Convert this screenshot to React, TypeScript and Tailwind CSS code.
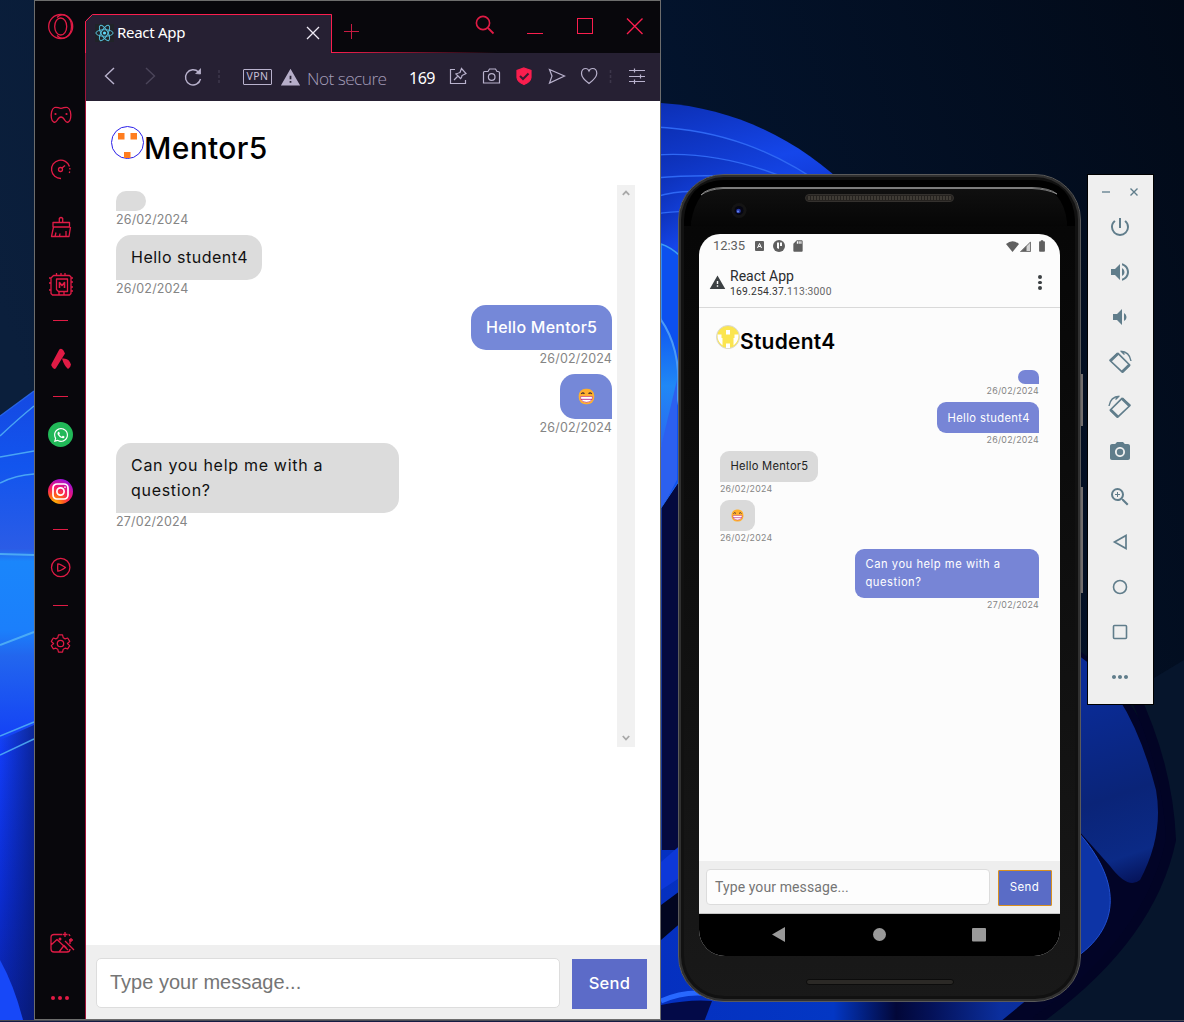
import type { ReactNode } from "react";
import { FaWhatsapp, FaInstagram } from "react-icons/fa";
import {
  MdPowerSettingsNew,
  MdVolumeUp,
  MdVolumeDown,
  MdPhotoCamera,
  MdZoomIn,
  MdMoreHoriz,
  MdWarning,
  MdSdCard,
  MdBatteryFull,
} from "react-icons/md";

type Message = { mine: boolean; text: string; date: string };

const conversation: Message[] = [
  { mine: false, text: "", date: "26/02/2024" },
  { mine: false, text: "Hello student4", date: "26/02/2024" },
  { mine: true, text: "Hello Mentor5", date: "26/02/2024" },
  { mine: true, text: "grin", date: "26/02/2024" },
  { mine: false, text: "Can you help me with a\nquestion?", date: "27/02/2024" },
];

function Wallpaper() {
  return (
    <svg className="absolute inset-0" width="1184" height="1022" viewBox="0 0 1184 1022" fill="none">
      <defs>
        <linearGradient id="night" x1="0" y1="0.3" x2="1" y2="0">
          <stop offset="0" stopColor="#0b1f3c" />
          <stop offset="0.55" stopColor="#03142e" />
          <stop offset="1" stopColor="#020a18" />
        </linearGradient>
        <linearGradient id="left" x1="0" y1="391" x2="0" y2="1022" gradientUnits="userSpaceOnUse">
          <stop offset="0" stopColor="#1549e2" />
          <stop offset="0.12" stopColor="#1255ee" />
          <stop offset="0.25" stopColor="#2b5ce6" />
          <stop offset="0.27" stopColor="#1a86fb" />
          <stop offset="0.38" stopColor="#1b7ffb" />
          <stop offset="0.42" stopColor="#2266ee" />
          <stop offset="0.57" stopColor="#123cf6" />
          <stop offset="0.8" stopColor="#0b2cd0" />
          <stop offset="1" stopColor="#0a22a0" />
        </linearGradient>
        <linearGradient id="shadeR" x1="0" y1="0" x2="1" y2="0">
          <stop offset="0" stopColor="#06145c" stopOpacity="0" />
          <stop offset="1" stopColor="#06145c" stopOpacity="0.6" />
        </linearGradient>
        <linearGradient id="fold" x1="0" y1="0" x2="0.3" y2="1">
          <stop offset="0" stopColor="#0c2fb4" />
          <stop offset="0.5" stopColor="#1546ea" />
          <stop offset="1" stopColor="#0d2fc4" />
        </linearGradient>
        <linearGradient id="petal" x1="0" y1="0" x2="0" y2="1">
          <stop offset="0" stopColor="#0d4ff0" />
          <stop offset="0.5" stopColor="#2088f5" />
          <stop offset="1" stopColor="#2d60ee" />
        </linearGradient>
        <linearGradient id="low" x1="661" y1="0" x2="1184" y2="0" gradientUnits="userSpaceOnUse">
          <stop offset="0" stopColor="#0530c0" />
          <stop offset="0.33" stopColor="#0337c4" />
          <stop offset="0.45" stopColor="#020738" />
          <stop offset="0.52" stopColor="#04125a" />
          <stop offset="0.65" stopColor="#0b2f9e" />
          <stop offset="0.85" stopColor="#0a2c9a" />
          <stop offset="1" stopColor="#03103c" />
        </linearGradient>
        <linearGradient id="outer" x1="1085" y1="700" x2="1150" y2="890" gradientUnits="userSpaceOnUse">
          <stop offset="0" stopColor="#0a2b96" />
          <stop offset="0.5" stopColor="#0a2478" />
          <stop offset="0.8" stopColor="#0b2a86" />
          <stop offset="1" stopColor="#030a48" />
        </linearGradient>
      </defs>
      <rect width="1184" height="1022" fill="url(#night)" />
      <path d="M0 416L34 391V1022H0Z" fill="url(#left)" />
      <path d="M0 740L34 725V1022H0Z" fill="url(#shadeR)" />
      <path d="M0 960Q14 985 23 1020H0Z" fill="#1748f8" />
      <g stroke="#53b4f6" strokeWidth="1.4" opacity=".85">
        <path d="M0 416L34 391" stroke="#2c6cf0" />
        <path d="M0 436Q18 419 34 406" />
        <path d="M0 457L34 451" />
        <path d="M0 483Q16 475 34 474" />
        <path d="M0 554L34 555" strokeWidth="2" />
        <path d="M0 645L34 632" strokeWidth="2" />
        <path d="M0 736L34 722" />
        <path d="M0 755L34 739" />
      </g>
      <path d="M661 103C740 108 805 145 850 190V250H661Z" fill="url(#fold)" />
      <g fill="url(#fold)" stroke="#2f68f4" strokeWidth="1.4">
        <path d="M655 127C720 130 775 150 830 190V300H655Z" />
        <path d="M655 155C710 151 755 165 790 180V300H655Z" />
        <path d="M655 178Q690 175 720 176V300H655Z" />
        <path d="M655 197Q680 190 700 192V300H655Z" />
        <path d="M655 214Q680 210 700 212V300H655Z" />
      </g>
      <path d="M661 244Q680 250 700 280V520H661Z" fill="#0c50ee" stroke="#3c9cf6" strokeWidth="1.5" />
      <path d="M655 312C686 348 686 410 655 460Z" fill="url(#petal)" stroke="#4a9af8" strokeWidth="2" />
      <path d="M661 447L677 380V480L661 510Z" fill="#2c60ee" />
      <path d="M661 508L685 472V860H661Z" fill="#04093e" stroke="#2467ef" />
      <path d="M661 850H1184V1022H661Z" fill="url(#low)" />
      <path d="M661 862L684 842V875L661 890Z" fill="#0d38d8" />
      <path d="M661 905L684 888V920L661 940Z" fill="#020620" />
      <path d="M661 1001Q690 988 720 996" stroke="#2868ff" strokeWidth="5" />
      <path d="M661 1022V1005Q690 999 712 1001L704 1022Z" fill="#030a48" />
      <path d="M1078 650Q1140 690 1184 820V1022H1000L1078 958Z" fill="#020427" />
      <path d="M1078 655Q1130 690 1156 790Q1164 835 1140 880Q1128 890 1110 866L1078 830Z" fill="url(#outer)" />
      <path d="M1078 832C1121 880 1121 925 1078 956Z" fill="#0d34a6" stroke="#214fd0" />
      <path d="M1134 690Q1168 750 1171 850Q1150 940 1040 1020H1184V660Z" fill="#06152c" />
      <path d="M1132 690Q1168 765 1171 840Q1150 940 1036 1021" stroke="#020425" strokeWidth="10" />
      <rect y="1020" width="1184" height="1" fill="#4a4c55" />
      <rect y="1021" width="1184" height="1" fill="#141b43" />
    </svg>
  );
}

function Grin({ size }: { size: number }) {
  return (
    <svg width={size} height={size} viewBox="0 0 18 18" className="shrink-0">
      <rect x=".8" y=".8" width="16.4" height="16.4" rx="7.2" fill="#ffb02e" />
      <path d="M3.4 6.3Q5 4 6.8 6.100M11.200 6.100Q13 4 14.600 6.300" stroke="#402a32" strokeWidth="1.3" fill="none" />
      <path d="M2.8 9H15.2V11Q14 15.2 9 15.2Q4 15.2 2.8 11Z" fill="#fff" stroke="#bb1d80" strokeWidth=".6" />
      <path d="M3 12H15" stroke="#bb1d80" strokeWidth=".9" />
    </svg>
  );
}

function SideIcon({ children, className }: { children: ReactNode; className: string }) {
  return (
    <svg
      width="30"
      height="30"
      viewBox="0 0 30 30"
      fill="none"
      stroke="#e01b45"
      strokeWidth="1.3"
      strokeLinejoin="round"
      className={"shrink-0 " + className}
    >
      {children}
    </svg>
  );
}

function Dash({ className }: { className: string }) {
  return <div className={"mr-px h-px w-[15px] shrink-0 bg-[#e01b45] " + className} />;
}

function SideBar() {
  return (
    <aside className="flex w-[51px] shrink-0 flex-col items-center border-r border-[#a0143a] bg-[#08070c] pl-0.5">
      <SideIcon className="mt-[11px]">
        <circle cx="14.7" cy="14.5" r="12" />
        <ellipse cx="14.7" cy="14.5" rx="6" ry="8.500" />
        <path d="M11 5.500C17 -1 25.500 5 25.500 14.500C25.500 24 17 30 11 23.500" />
      </SideIcon>
      <SideIcon className="mt-[58px]">
        <path d="M8.5 7.5C11 6.6 12.5 8.3 15 8.3C17.5 8.3 19 6.6 21.5 7.5C24.5 8.8 25.2 14 24.6 18C24 22.5 20.7 23.5 19 20.5C17.5 17.8 16.5 17 15 17C13.5 17 12.5 17.8 11 20.5C9.3 23.5 6 22.5 5.4 18C4.8 14 5.5 8.8 8.5 7.5Z" />
        <circle cx="9.5" cy="14" r="1.1" fill="#e01b45" stroke="none" />
        <circle cx="20.5" cy="14" r="1.1" fill="#e01b45" stroke="none" />
      </SideIcon>
      <SideIcon className="mt-[25px]">
        <path d="M15 23.5A9.2 9.2 0 1 1 23.5 11.5" />
        <path d="M23.8 13A9.2 9.2 0 0 1 22.5 19.5" strokeDasharray="1.5 2" />
        <circle cx="14.5" cy="14.5" r="2" />
        <path d="M16 13L19 10.5" />
      </SideIcon>
      <SideIcon className="mt-[28px]">
        <path d="M13.3 9V5.5Q15 3.5 16.7 5.5V9M7 9.5H23.5V14H7ZM7.5 14L5.5 23.5H23L24.5 14M10 19.5L9 23.5M14 20.5L13.5 23.5M20 18V23.5" />
      </SideIcon>
      <SideIcon className="mt-[27px]">
        <path d="M7.5 5.5H23.5L25 7V23.5L23.5 25H6.5L5 23.5V8Z M10.5 9H21.5V21.5H12.5L10.5 19.5Z M3 8H5M3 13H5M3 20H5M25 8H27M25 12H27M25 17H27M25 21H27M10.5 5.5V3M15 5.5V3M19 5.5V3M13 21.5V25M18 21.5V25" />
        <path d="M13.5 18V12.5L16 15.5L18.5 12.5V18" strokeWidth="1.6" />
      </SideIcon>
      <Dash className="mt-[20px]" />
      <SideIcon className="mt-[23px]">
        <path d="M13.3 5.5Q15.5 3.8 17.5 6.5L19 9.5L10 24Q8.5 26 6.5 23.5L5.3 21.5Q5 20.5 6 19Z" fill="#e01b45" stroke="none" />
        <path d="M16 14.5Q23 13.500 25 20.5Q24.5 24 22 25Q18 21.5 16 14.5Z" fill="#e01b45" stroke="none" />
      </SideIcon>
      <Dash className="mt-[22px]" />
      <div className="mr-px mt-[25px] flex size-[25px] shrink-0 items-center justify-center rounded-full bg-[#21b858] text-white">
        <FaWhatsapp size={16} />
      </div>
      <div className="mr-px mt-[32px] flex size-[25px] shrink-0 items-center justify-center rounded-full bg-[radial-gradient(circle_at_25%_100%,#ffc400_0%,#ff5a1f_30%,#f3166c_55%,#8a10f5_90%)] text-white">
        <svg width="17" height="17" fill="none" stroke="#fff" strokeWidth="1.7">
          <rect x="1" y="1" width="15" height="15" rx="4" />
          <circle cx="8.5" cy="8.5" r="3.600" />
          <circle cx="13" cy="4.200" r=".6" fill="#fff" strokeWidth=".5" />
        </svg>
      </div>
      <Dash className="mt-[25px]" />
      <SideIcon className="mt-[22px]">
        <circle cx="14.7" cy="15.5" r="9.200" />
        <path d="M11.8 11.8Q14 11.6 19.5 15.5Q14 19.3 11.8 19.2Q11.5 15.5 11.8 11.8Z" />
      </SideIcon>
      <Dash className="mt-[23px]" />
      <SideIcon className="mt-[22px]">
        <circle cx="14.500" cy="15.5" r="3.2" />
        <path
          d="M12.8 6.5H17.2L18 9.6L20 10.7L22.8 9.8L25 13.4L22.5 15.5L25 17.8L22.8 21.3L20 20.5L18 21.6L17.2 24.7H12.8L12 21.6L10 20.5L7.2 21.3L5 17.8L7.5 15.5L5 13.4L7.2 9.8L10 10.7L12 9.6Z"
          transform="translate(.7 .7) scale(.92 .95)"
        />
      </SideIcon>
      <SideIcon className="mt-auto">
        <path d="M16 5.5H8Q5 5.5 5 8.5V20Q5 23 8 23H21Q24 23 24 20M5 16L11 10.5L22 21M13 23L18 16.5L20.5 19M19 12L28 21M24 10V15" />
        <circle cx="14" cy="10" r="1.5" fill="#e01b45" stroke="none" />
        <path d="M19 3V8M16.5 5.5H21.5M25 9V13M23 11H27M24 7Q23.5 5.5 22.5 5.5" />
      </SideIcon>
      <div className="mt-[37px] mb-[19px] flex gap-[3px] pr-0.5">
        <i className="size-1 rounded-full bg-[#e01b45]" />
        <i className="size-1 rounded-full bg-[#e01b45]" />
        <i className="size-1 rounded-full bg-[#e01b45]" />
      </div>
    </aside>
  );
}

function ReactLogo() {
  return (
    <svg width="19" height="18" viewBox="-9.5 -9 19 18" fill="none" stroke="#56bcd8" className="bg-[#202328]">
      <circle r="1.6" fill="#61dafb" stroke="none" />
      <ellipse rx="8.6" ry="3.3" />
      <ellipse rx="8.6" ry="3.3" transform="rotate(60)" />
      <ellipse rx="8.6" ry="3.3" transform="rotate(120)" />
    </svg>
  );
}

function TitleBar() {
  return (
    <div className="relative flex h-[52px] shrink-0 bg-[#08070c]">
      <div className="absolute -left-px top-0 h-[20px] w-px bg-[#08070c]" />
      <div className="relative mt-[13px] flex h-[39px] w-[246px] items-center bg-[#262033] pb-0.5 pl-[9px]">
        <svg className="absolute -left-px top-0" width="247" height="39" fill="none" stroke="#fa1e4e">
          <path d="M0 0H7L0 7Z" fill="#08070c" stroke="none" />
          <path d="M.5 39V7.5L7.5 .5H246.5V39" />
        </svg>
        <ReactLogo />
        <span className="ml-[3px] pb-px font-['Noto_Sans'] text-[15px] leading-5 tracking-[-0.3px] text-white">React App</span>
        <svg className="ml-auto mr-[12px]" width="14" height="14" stroke="#eeeaf5" strokeWidth="1.3">
          <path d="M1 1L13 13M13 1L1 13" />
        </svg>
      </div>
      <div className="relative flex grow">
        <div className="absolute bottom-0 left-0 h-px w-[165px] bg-linear-to-r from-[#fa1e4e] to-transparent" />
        <svg width="328" height="51" fill="none" stroke="#fa1e4e">
          <path d="M12 30.5H27M19.5 23V38" stroke="#c81a42" />
          <circle cx="151" cy="22" r="6.6" strokeWidth="1.6" stroke="#e01b45" />
          <path d="M156 27L161.5 32.5" strokeWidth="1.8" stroke="#e01b45" />
          <path d="M195 32.5H211" />
          <rect x="245.5" y="17.5" width="15" height="15" />
          <path d="M295 17.5L310.5 33M310.5 17.5L295 33" strokeWidth="1.4" />
        </svg>
      </div>
    </div>
  );
}

function ToolBar() {
  return (
    <div className="flex h-[48px] shrink-0 items-center bg-[#262033]">
      <svg width="154" height="48" fill="none" stroke="#b9b2cd" strokeWidth="1.4">
        <path d="M28 15L19.5 23L28 31" />
        <path d="M60 15L68.5 23L60 31" stroke="#4b455a" />
        <path d="M112.500 19A7.600 7.600 0 1 0 114.500 26" />
        <path d="M109.500 20.500L114.500 21V15.500" fill="#b9b2cd" strokeWidth=".8" />
        <path d="M133 17V32" stroke="#3c364a" strokeWidth="1.600" strokeDasharray="3 2" />
      </svg>
      <div className="ml-[3px] flex h-4 w-[29px] items-center justify-center rounded-[1px] border border-[#b9b2cd] pb-px font-['Noto_Sans'] text-[10.5px] leading-none tracking-[0.5px] text-[#c5bfd6]">
        VPN
      </div>
      <MdWarning size={21} className="ml-[8px] text-[#b6aec9]" />
      <span className="ml-[6px] mt-[3px] w-[80px] whitespace-nowrap font-['Open_Sans'] text-[17.3px] font-light tracking-[-0.55px] text-[#a39cb8]">
        Not secure
      </span>
      <span className="ml-[22px] mt-px w-[26px] font-['Noto_Sans'] text-[16px] tracking-[-0.5px] text-white">169</span>
      <svg width="223" height="48" fill="none" stroke="#b9b2cd" strokeWidth="1.2">
        <path d="M20 16.5H15.5V30.5H30.5V27" />
        <path d="M19 27L22.5 23.5M20.5 20.5L26 26M21 21Q23.5 20 25 19.5L26.5 15.5L31 20.5L27 22.5Q27 24 25.5 26" />
        <path d="M49.5 18.500H53L54.5 16H60.5L62 18.5H63Q64.500 18.5 64.500 19.5V30H48.5V19.500Q48.5 18.5 49.500 18.5Z" />
        <circle cx="56.700" cy="24" r="3.3" />
        <path d="M89 15L96 17.5V24.5Q95.5 29 89 31.5Q82.5 29 82 24.5V17.5Z" fill="#fa1e4e" stroke="#fa1e4e" />
        <path d="M85 23L88 26L93.5 20.5" stroke="#3a1a32" strokeWidth="2" />
        <path d="M114.5 16.5L129.5 23L114.5 30L117 23Z" />
        <path d="M154 30.5Q146.5 25 146.5 20.5Q146.5 15.5 151 15.5Q153 15.5 154 18Q155 15.5 157.5 15.5Q161.8 15.5 161.8 20.5Q161.5 25 154 30.5Z" />
        <path d="M175.5 17V32" stroke="#3c364a" strokeWidth="1.6" strokeDasharray="3 2" />
        <path d="M194 17.5H210M194 23.5H210M194 28.5H210M199.5 15.5V19.5M205.5 21.5V25.5M199.5 26.5V31" />
      </svg>
    </div>
  );
}

function DesktopText({ text }: { text: string }) {
  if (text === "") return null;
  if (text === "grin") {
    return (
      <div className="flex h-[25px] w-[22px] items-center justify-center">
        <Grin size={17} />
      </div>
    );
  }
  if (text.includes("\n")) {
    return <div className="w-[253px] whitespace-pre text-[16px] leading-[25px] tracking-[0.7px]">{text}</div>;
  }
  return text.includes("student") ? (
    <div className="w-[116px] whitespace-pre text-[16px] leading-[25px] tracking-[0.5px]">{text}</div>
  ) : (
    <div className="w-[111px] whitespace-pre text-[16px] leading-[25px] tracking-[0.25px]">{text}</div>
  );
}

function DesktopMessages() {
  return (
    <div className="flex grow flex-col px-[5px] pt-[6px]">
      {conversation.map((m, i) => (
        <div key={i} className={m.mine ? "mb-[5px] flex flex-col items-end" : "mb-[5px] flex flex-col items-start"}>
          <div
            className={
              m.mine
                ? "rounded-[15px] rounded-br-none bg-[#7588d8] px-[15px] py-[10px] font-medium text-white"
                : "rounded-[15px] rounded-bl-none bg-[#dcdcdc] px-[15px] py-[10px] text-[#111]"
            }
          >
            <DesktopText text={m.text} />
          </div>
          <div className="h-[19.3px] text-[12.5px] leading-[17px] tracking-[0.15px] text-[#858585]">{m.date}</div>
        </div>
      ))}
    </div>
  );
}

function DesktopPage() {
  return (
    <main className="flex grow flex-col bg-white font-[Inter,sans-serif]">
      <header className="ml-[25px] mt-[25px] flex h-[59px] items-start">
        <svg width="33" height="33" viewBox="0 0 33 33">
          <circle cx="16.5" cy="16.5" r="16" fill="#fff" stroke="#2a1fe8" />
          <path d="M7 7H13.5V13.5H7ZM19.5 7H26V13.5H19.5ZM13 26H19.5V32H13Z" fill="#ff7d1f" />
        </svg>
        <h1 className="mt-1 text-[30px] font-medium leading-9 tracking-[0.35px] text-black">Mentor5</h1>
      </header>
      <div className="ml-[25px] flex h-[562px] w-[524px]">
        <DesktopMessages />
        <div className="flex w-[18px] flex-col items-center justify-between bg-[#f1f1f1] pb-[6px] pr-px pt-[5px]">
          <svg width="8" height="6" fill="none" stroke="#a8a8a8" strokeWidth="1.8">
            <path d="M.8 4.8L4 1.5L7.2 4.8" />
          </svg>
          <svg width="8" height="6" fill="none" stroke="#a8a8a8" strokeWidth="1.8">
            <path d="M.8 1L4 4.5L7.2 1" />
          </svg>
        </div>
      </div>
      <footer className="mt-auto flex h-[74px] items-center bg-[#efefef] pl-[10px] pt-0.5">
        <div className="flex h-[50px] w-[464px] items-center rounded-[5px] border border-[#ddd] bg-white pb-0.5 pl-[13px] font-['Liberation_Sans'] text-[20px] text-[#757575]">
          Type your message...
        </div>
        <button className="ml-3 mt-0.5 h-[50px] w-[75px] bg-[#5c6bc8] pb-0.5 text-[16.5px] font-medium tracking-[0.3px] text-white">
          Send
        </button>
      </footer>
    </main>
  );
}

function BrowserWindow() {
  return (
    <section className="absolute left-[34px] top-0 flex h-[1020px] w-[627px] border border-[#6d6d6d]">
      <SideBar />
      <div className="flex grow flex-col">
        <TitleBar />
        <ToolBar />
        <DesktopPage />
      </div>
    </section>
  );
}

function StatusBar() {
  return (
    <div className="flex h-6 items-center pl-[14px] pr-[11px] text-[#5f5f5f]">
      <span className="w-[42px] text-[13px] leading-6 tracking-[-0.1px]">12:35</span>
      <svg width="9" height="11">
        <rect width="9" height="10" rx="1" fill="#5f5f5f" />
        <path d="M2.5 7L4.5 2.5L6.5 7M3.3 5.5H5.7" stroke="#fff" fill="none" />
      </svg>
      <svg width="12" height="12" viewBox="0 0 12 12" className="ml-[9px]">
        <circle cx="6" cy="6" r="6" fill="#5f5f5f" />
        <path d="M4 2.5H6V9L4 8ZM7 2.5H9V6H7Z" fill="#fdfdfd" />
      </svg>
      <MdSdCard size={14} className="ml-[6px]" />
      <div className="ml-auto flex items-center">
        <svg width="13" height="11">
          <path d="M6.5 11L0 3Q6.5 -2.5 13 3Z" fill="#5f5f5f" />
        </svg>
        <svg width="12" height="11" className="ml-px">
          <path d="M0 11L11 0V11Z" fill="#d4d4d4" />
          <path d="M0 11L6.5 4.5V11Z" fill="#5f5f5f" />
          <path d="M1 10.5L10.5 1V10.5Z" fill="none" stroke="#777" />
        </svg>
        <MdBatteryFull size={14} className="ml-[3px]" />
      </div>
    </div>
  );
}

function PhoneText({ text }: { text: string }) {
  if (text === "") return null;
  if (text === "grin") {
    return (
      <div className="flex h-[17px] w-[14px] items-center justify-center">
        <Grin size={13} />
      </div>
    );
  }
  if (text.includes("\n")) {
    return <div className="w-[163px] whitespace-pre text-[11.2px] leading-[17.5px] tracking-[0.52px]">{text}</div>;
  }
  return text.includes("student") ? (
    <div className="w-[81px] whitespace-pre text-[11.2px] leading-[18px] tracking-[0.38px]">{text}</div>
  ) : (
    <div className="w-[77px] whitespace-pre text-[11.2px] leading-[17px] tracking-[0.25px]">{text}</div>
  );
}

function PhoneMessages() {
  return (
    <div className="mx-[21px] flex flex-col">
      {conversation.map((m, i) => (
        <div key={i} className={m.mine ? "flex flex-col items-start" : "flex flex-col items-end"}>
          <div
            className={
              m.mine
                ? "rounded-[9px] rounded-bl-none bg-[#dadada] px-[10.5px] py-[7px] text-[#222]"
                : m.text.includes("student")
                  ? "h-[31px] rounded-[9px] rounded-br-none bg-[#7785d6] px-[10.5px] py-[7px] text-white"
                  : "rounded-[9px] rounded-br-none bg-[#7785d6] px-[10.5px] py-[7px] text-white"
            }
          >
            <PhoneText text={m.text} />
          </div>
          <div className="h-[18px] text-[8.8px] leading-[13px] tracking-[0.25px] text-[#858585]">{m.date}</div>
        </div>
      ))}
    </div>
  );
}

function Phone() {
  return (
    <section className="absolute left-[678px] top-[174px] flex h-[828px] w-[403px] flex-col items-center rounded-[46px] border border-[#5a5a5a] bg-linear-to-b from-[#060606] to-[#191919] shadow-[inset_0_0_0_2px_#303030,inset_0_0_0_5px_#111]">
      <div className="absolute -right-[3px] top-[199px] h-[52px] w-[2px] bg-[#726d6d]" />
      <div className="absolute -right-[3px] top-[312px] h-[106px] w-[2px] bg-[#726d6d]" />
      <svg width="401" height="59" viewBox="0 -1 401 59" fill="none" className="shrink-0">
        <defs>
          <linearGradient id="lens" x1="0" y1="0" x2="0" y2="1">
            <stop offset="0" stopColor="#101010" />
            <stop offset="1" stopColor="#060606" />
          </linearGradient>
        </defs>
        <path d="M5 50V46Q7 4 46 4H355Q394 4 396 46V50Z" fill="#000" />
        <path d="M12 50V46Q18 12 40 12H356Q384 12 388 46V50Z" fill="url(#lens)" />
        <path d="M22 19Q28 12 44 11.500H353Q371 12 378 18Q368 13 353 12.500H44Q30 13 22 19Z" stroke="#9a9a9a" strokeWidth=".8" />
        <rect x="126.5" y="18.5" width="148" height="7" rx="3.5" fill="#25221f" stroke="#34312e" />
        <path d="M129 22H273" stroke="#3f3b35" strokeWidth="4" strokeDasharray="2 1" />
        <circle cx="60" cy="34.5" r="7.5" fill="#141414" />
        <circle cx="60" cy="34.5" r="4.5" fill="#060612" />
        <circle cx="59.5" cy="35" r="2.300" fill="#2639a5" />
        <circle cx="59" cy="35.5" r="1" fill="#6c8cf4" />
      </svg>
      <div className="flex h-[722px] w-[361px] shrink-0 flex-col overflow-hidden rounded-b-[26px] rounded-t-[21px] bg-[#fcfcfc] font-[Roboto,sans-serif]">
        <StatusBar />
        <div className="flex h-[50px] shrink-0 items-center border-b border-[#d9d9d9] pl-[10px] pr-[18.5px]">
          <MdWarning size={17} className="text-[#3c4043]" />
          <div className="ml-[4px] mt-px">
            <div className="text-[14px] leading-[18px] text-[#2a2c2f]">React App</div>
            <div className="text-[10.3px] leading-[14px] tracking-[0.22px] text-[#333]">
              169.254.37.<span className="text-[#666]">113:3000</span>
            </div>
          </div>
          <div className="ml-auto flex flex-col gap-[1.8px]">
            <i className="size-[3.6px] rounded-full bg-[#3c4043]" />
            <i className="size-[3.6px] rounded-full bg-[#3c4043]" />
            <i className="size-[3.6px] rounded-full bg-[#3c4043]" />
          </div>
        </div>
        <div className="flex grow flex-col font-[Inter,sans-serif]">
          <header className="ml-[17px] mt-[17px] flex h-[45px] items-start">
            <svg width="24" height="24" viewBox="0 0 24 24">
              <circle cx="12" cy="12" r="11.5" fill="#fbe550" stroke="#d8d8d8" />
              <path d="M10 5H14V9.5H10ZM1.5 9.500H5.500V13H6.500V20.500Q1 16 1.500 9.500ZM18.500 9.500H22.500Q23 16 17.500 20.500V13H18.500ZM10 18.500H14V23H10Z" fill="#fff" />
            </svg>
            <h1 className="mt-0.5 text-[21px] font-semibold leading-[30px] tracking-[0.25px] text-black">Student4</h1>
          </header>
          <PhoneMessages />
          <footer className="mt-auto flex h-[53px] items-center border-b border-[#c4c4c4] bg-[#eee] pl-[7px]">
            <div className="flex h-[36px] w-[284px] items-center rounded-[4px] border border-[#dcdcdc] bg-[#fdfdfd] pl-[8px] font-[Roboto] text-[14px] tracking-[0.1px] text-[#757575]">
              Type your message...
            </div>
            <button className="ml-2 mt-px h-[36px] w-[54px] rounded-[1px] border border-[#d9901f] bg-[#5a6cc6] pr-px text-[11.5px] tracking-[0.45px] text-white">
              Send
            </button>
          </footer>
        </div>
        <nav className="flex h-[42px] shrink-0 items-center bg-black">
          <svg width="361" height="42" fill="#999">
            <path d="M73 20.5L86 13V28Z" />
            <circle cx="180.500" cy="20.500" r="6.500" />
            <rect x="273" y="14" width="14" height="13.5" rx="1" />
          </svg>
        </nav>
      </div>
      <div className="mt-[23px] h-[6px] w-[148px] rounded-full border border-[#0c0c0c] bg-[#2b2926]" />
    </section>
  );
}

function RotateIcon({ flip }: { flip?: boolean }) {
  return (
    <svg width="24" height="24" viewBox="0 0 24 24" fill="none" stroke="#607d8b" className={flip ? "-scale-x-100" : ""}>
      <path d="M10 3.300L21.700 15L14.300 22.200L2 10.500Z" strokeWidth="1.700" strokeLinejoin="round" />
      <path d="M2.500 10.800L10 3.500M14 22L21.500 14.800" strokeWidth="2.800" />
      <path d="M12.500 1.200Q21.500 1.500 23 11M13 1.200L16.500 4.500" strokeWidth="1.400" />
    </svg>
  );
}

function EmulatorTools() {
  return (
    <section className="absolute left-[1087px] top-[174px] flex h-[531px] w-[67px] flex-col items-center border border-black bg-[#efefef] text-[#607d8b]">
      <div className="mt-[12px] flex h-[10px] items-center gap-[20px] pr-0.5">
        <i className="h-[1.5px] w-2 bg-[#90a4ae]" />
        <svg width="8" height="8" stroke="#607d8b" strokeWidth="1.4">
          <path d="M.5 .5L7.5 7.5M7.5 .5L.5 7.5" />
        </svg>
      </div>
      <div className="mr-[1px] mt-[7px] flex flex-col">
        <div className="flex h-[45px] items-center"><MdPowerSettingsNew size={24} /></div>
        <div className="flex h-[45px] items-center"><MdVolumeUp size={24} /></div>
        <div className="flex h-[45px] items-center"><MdVolumeDown size={24} /></div>
        <div className="flex h-[45px] items-center"><RotateIcon /></div>
        <div className="flex h-[45px] items-center"><RotateIcon flip /></div>
        <div className="flex h-[45px] items-center"><MdPhotoCamera size={24} /></div>
        <div className="flex h-[45px] items-center"><MdZoomIn size={24} /></div>
        <div className="flex h-[45px] items-center">
          <svg width="24" height="24" fill="none" stroke="#607d8b" strokeWidth="1.7">
            <path d="M6.5 12L18 5.5V18.5Z" />
          </svg>
        </div>
        <div className="flex h-[45px] items-center">
          <svg width="24" height="24" fill="none" stroke="#607d8b" strokeWidth="1.6">
            <circle cx="12" cy="12" r="6.5" />
          </svg>
        </div>
        <div className="flex h-[45px] items-center">
          <svg width="24" height="24" fill="none" stroke="#607d8b" strokeWidth="1.6">
            <rect x="5.5" y="5.5" width="13" height="13" rx="1" />
          </svg>
        </div>
        <div className="flex h-[45px] items-center"><MdMoreHoriz size={24} /></div>
      </div>
    </section>
  );
}

export default function App() {
  return (
    <div className="relative h-[1022px] w-[1184px] overflow-hidden bg-[#041329]">
      <Wallpaper />
      <BrowserWindow />
      <Phone />
      <EmulatorTools />
    </div>
  );
}
